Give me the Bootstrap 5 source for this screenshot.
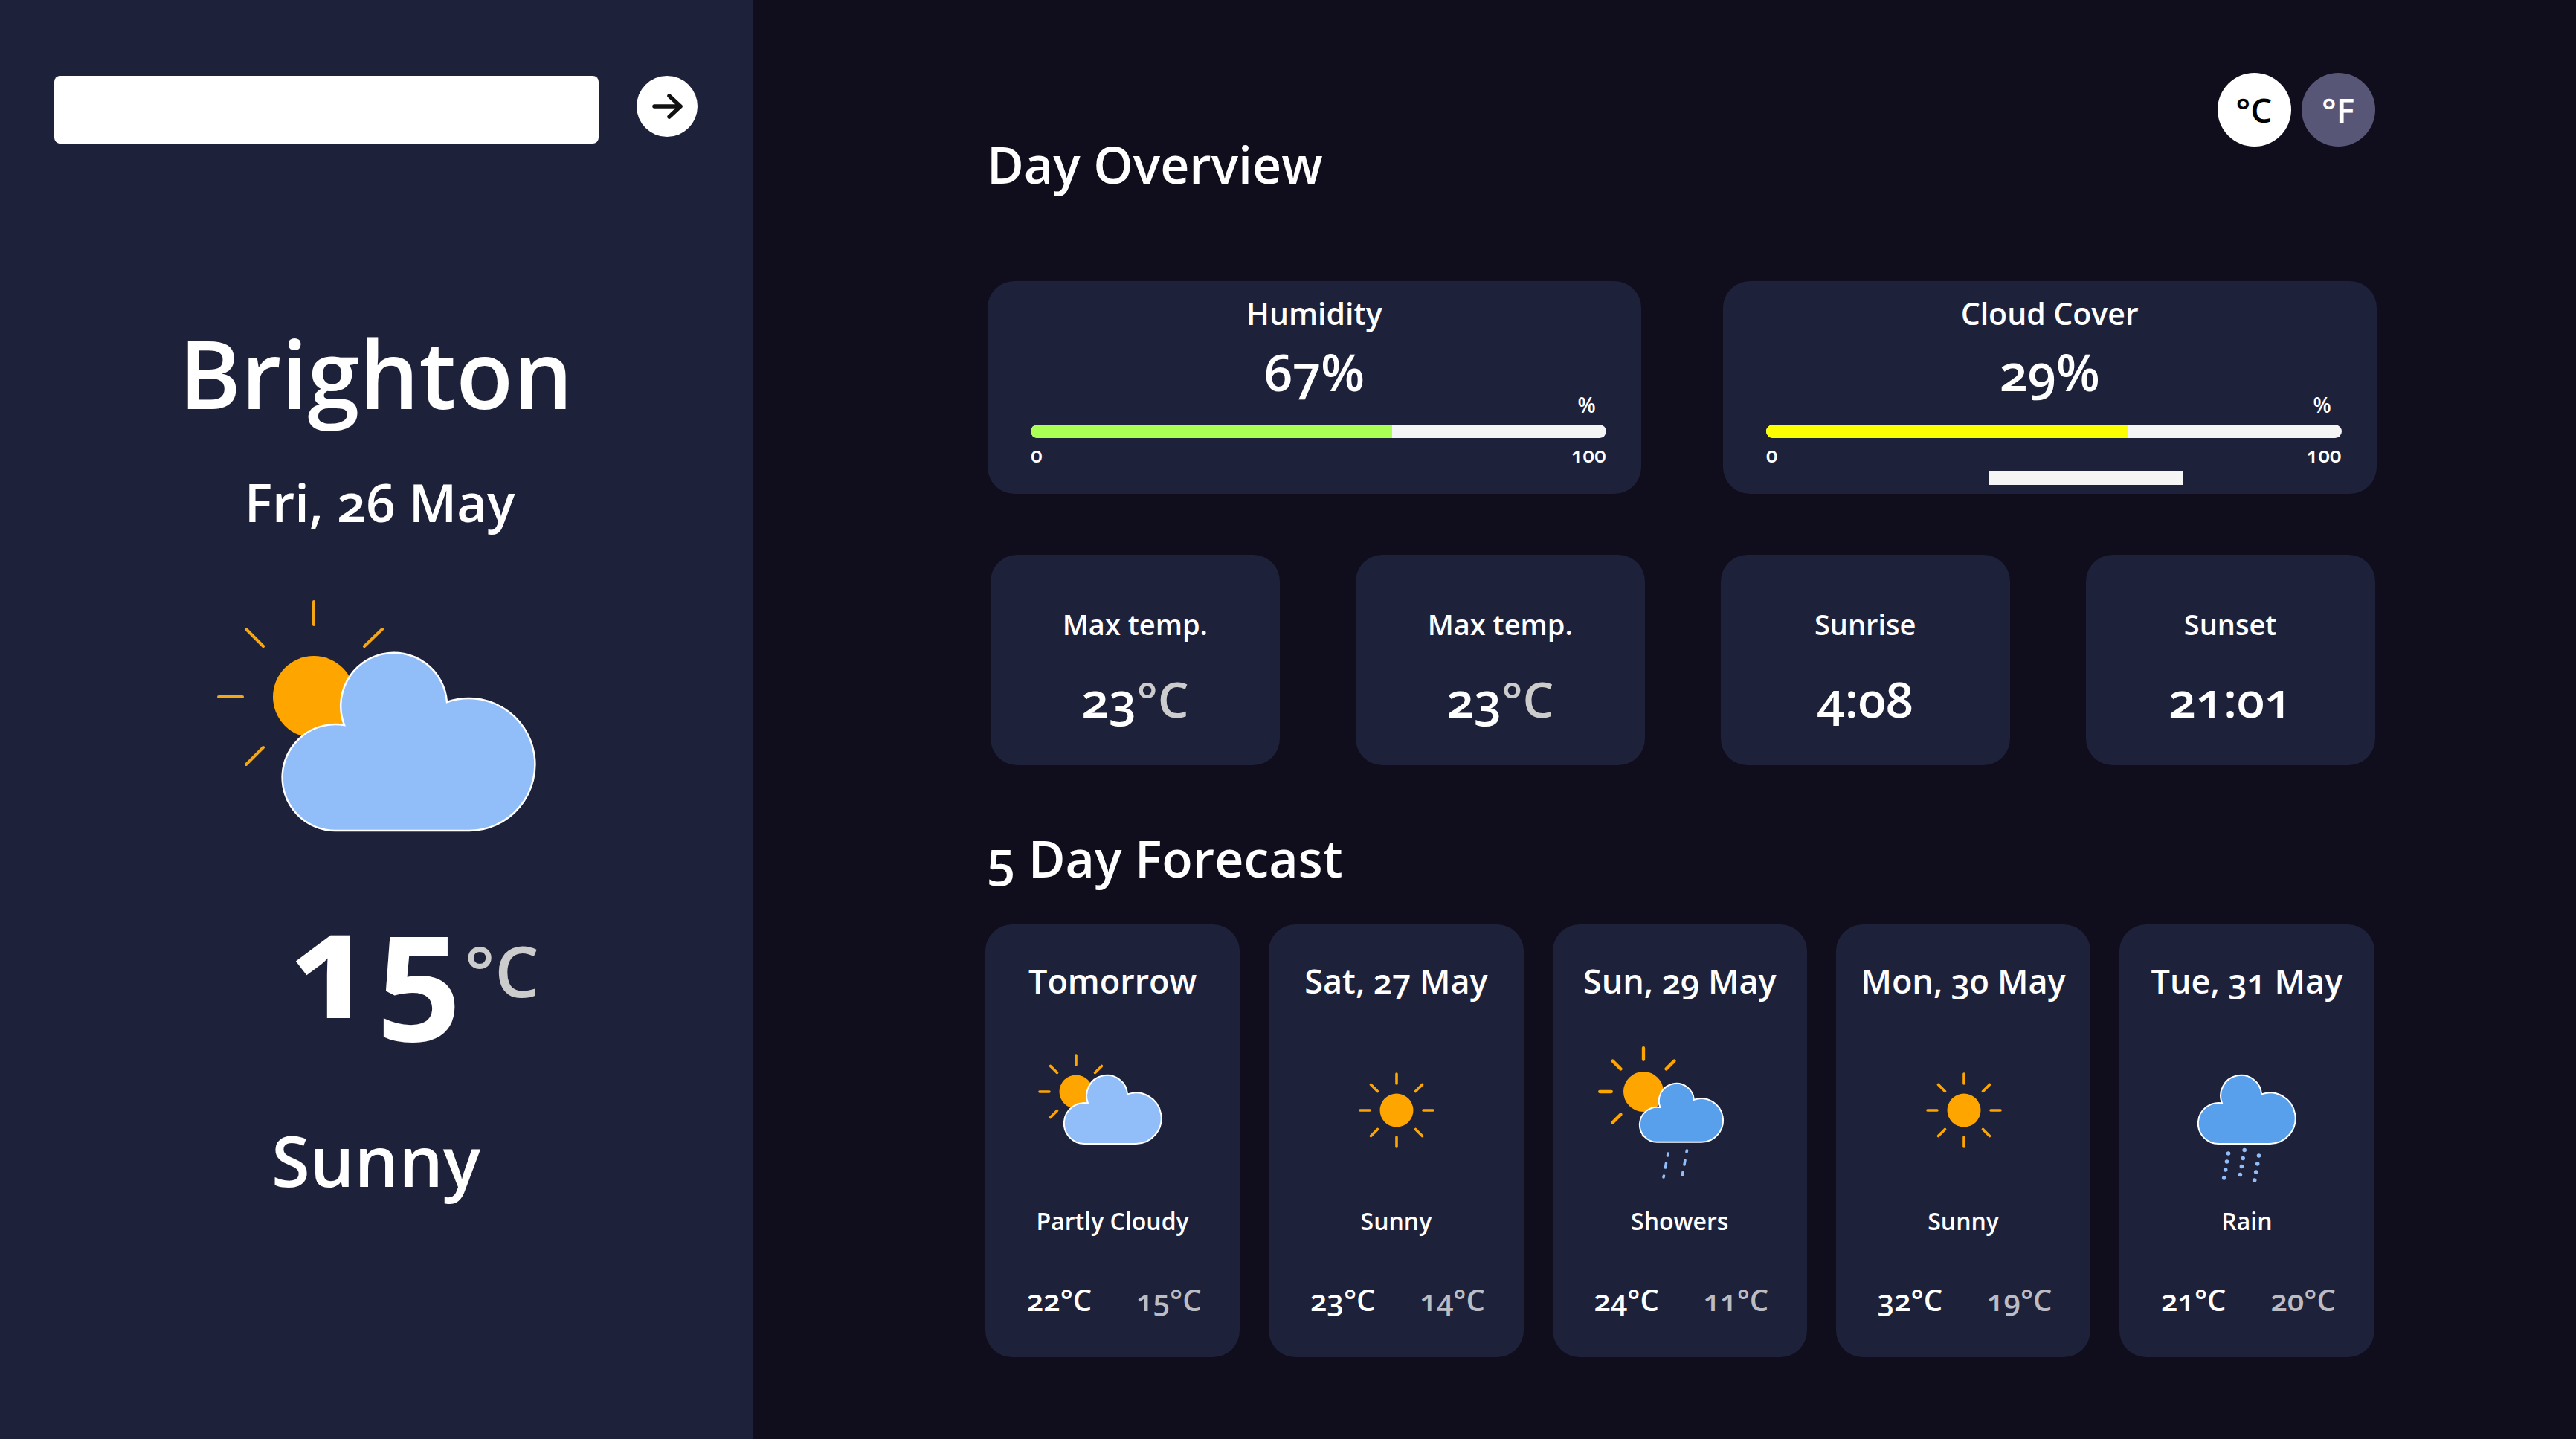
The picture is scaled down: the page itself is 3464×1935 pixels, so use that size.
<!DOCTYPE html>
<html lang="en">
<head>
<meta charset="utf-8">
<meta name="viewport" content="width=device-width, initial-scale=1">
<title>Weather - Brighton</title>
<link href="https://cdn.jsdelivr.net/npm/bootstrap@5.3.0/dist/css/bootstrap.min.css" rel="stylesheet">
<style>
  body { background: #100e1d; color: #fff; font-family: "Open Sans", "Noto Sans", sans-serif; font-weight: 600; font-variant-numeric: oldstyle-nums; }
  h1, h2, h3, p { margin: 0; font-weight: 600; }
  .side { flex: 0 0 29.25%; background: #1e213a; padding: 102px 75px 60px 73px; }
  .search-box { height: 91px; border: 0; border-radius: 8px; font-size: 38px; }
  .search-form { gap: 51px; }
  .go-btn { flex: 0 0 82px; height: 82px; background: #fff; }
  .city { font-size: 126px; line-height: 160px; margin-top: 228px; }
  .today { font-size: 70px; line-height: 88px; margin-top: 50px; padding-left: 10px; }
  .now-icon { width: 432px; height: 315px; margin-top: 86px; }
  .now-temp { font-size: 200px; line-height: 200px; margin-top: 72px; padding-left: 104px; font-weight: 700; }
  .now-unit { font-size: 94px; line-height: 100px; margin: 63px 0 0 4px; font-weight: 600; }
  .now-text { font-size: 94px; line-height: 120px; margin-top: 108px; }
  .unit-mute { color: #ccc; }
  .panel { padding: 98px 7.75vw 60px 9vw; }
  .panel-title { font-size: 68px; line-height: 80px; padding-left: 2px; }
  .top-title { margin-top: 83px; }
  .days-title { margin-top: 85px; }
  .unit-btn { width: 99px; height: 99px; padding: 0; font-size: 46px; font-weight: 600; background: #585676; color: #fff; }
  .unit-btn.active { background: #fff; color: #000; }
  .unit-set { gap: 14px; padding-right: 2px; }
  .tile { background: #1e213a; border-radius: 36px; flex: 1 1 0; min-width: 0; }
  .meters { gap: 110px; margin-top: 117px; padding-left: 3px; }
  .meter-tile { min-height: 286px; padding: 18px 47px 12px 58px; }
  .tile-label { font-size: 38px; line-height: 50px; }
  .meter-tile .tile-label { font-size: 41px; padding-right: 11px; }
  .meter-value { font-size: 68px; line-height: 60px; margin-top: 24px; padding-right: 11px; }
  .scale-text { font-size: 28px; line-height: 28px; }
  .meter-unit { padding-right: 14px; }
  .meter-bar { height: 18px; border-radius: 9px; background: #f5f5f5; margin: 13px 0 8px; }
  .bar-green { background: #aaff55; }
  .bar-yellow { background: #fbff00; }
  .bar-extra { width: 262px; height: 19px; background: #f5f5f5; margin: 8px 0 0 299px; }
  .stats { gap: 102px; margin-top: 82px; padding: 0 2px 0 7px; }
  .stat-tile { padding: 68px 0 58px; }
  .stat-value { font-size: 66px; line-height: 64px; margin-top: 43px; }
  .days { gap: 39px; margin-top: 49px; padding-right: 3px; }
  .day-tile { padding: 48px 0 51px; }
  .day-name { font-size: 45px; line-height: 56px; }
  .day-icon { width: 342px; height: 200px; margin-top: 53px; max-width: 100%; }
  .day-text { font-size: 32px; line-height: 40px; margin-top: 22px; }
  .day-temps { font-size: 40px; line-height: 50px; margin-top: 61px; margin-bottom: 1px; gap: 60px; padding-left: 4px; }
  .low { color: #bbbcc4; }
</style>
</head>
<body>
<svg width="0" height="0" class="position-absolute" aria-hidden="true">
  <defs>
    <path id="cloud" d="M72 239A71.500 71.500 0 1 1 83 97A71.500 71.500 0 1 1 221 66A89 89 0 1 1 251 239Z" stroke="#fff" vector-effect="non-scaling-stroke"/>
    <g id="sun" stroke="#ffa500" stroke-linecap="round">
      <circle r="22.500" fill="#ffa500" stroke="none"/>
      <path d="M0-36V-49M0 36V49M-36 0H-49M36 0H49M-25.500-25.500L-34.500-34.500M25.500-25.500L34.500-34.500M-25.500 25.500L-34.500 34.500M25.500 25.500L34.500 34.500" stroke-width="3.600"/>
    </g>
  </defs>
</svg>
<div class="d-flex min-vh-100">
  <aside class="side d-flex flex-column align-items-center">
    <form class="search-form d-flex align-items-start w-100">
      <input type="text" class="search-box form-control" aria-label="City">
      <button type="button" class="go-btn btn rounded-circle p-0 d-flex align-items-center justify-content-center" aria-label="Search">
        <svg width="42" height="36" viewBox="0 0 42 36" fill="none" stroke="#111" stroke-width="5.500" stroke-linecap="round" stroke-linejoin="round"><path d="M4 18H39M24 4L39 18L24 32"/></svg>
      </button>
    </form>
    <h1 class="city">Brighton</h1>
    <p class="today">Fri, 26 May</p>
    <svg class="now-icon" viewBox="290 805 432 315" aria-hidden="true">
      <circle cx="422" cy="937" r="55" fill="#ffa500"/>
      <path d="M422 809V840M331 846L354 869M514 846L490 869M294 937H326M354 1005L331 1028" stroke="#f5a615" stroke-width="4" stroke-linecap="round"/>
      <use href="#cloud" x="380" y="878" fill="#91bef8" stroke-width="2.500"/>
    </svg>
    <div class="now-temp d-flex align-items-start"><span>15</span><span class="now-unit unit-mute">°C</span></div>
    <p class="now-text">Sunny</p>
  </aside>
  <main class="panel flex-grow-1">
    <header class="d-flex justify-content-between align-items-start">
      <h2 class="panel-title top-title">Day Overview</h2>
      <div class="unit-set d-flex">
        <button type="button" class="unit-btn btn rounded-circle border-0 active">°C</button>
        <button type="button" class="unit-btn btn rounded-circle border-0">°F</button>
      </div>
    </header>
    <section class="meters d-flex">
      <div class="tile meter-tile">
        <h3 class="tile-label text-center">Humidity</h3>
        <p class="meter-value text-center">67%</p>
        <p class="scale-text meter-unit text-end">%</p>
        <div class="meter-bar progress"><div class="progress-bar bar-green" style="width: 62.8%"></div></div>
        <div class="scale-text d-flex justify-content-between"><span>0</span><span>100</span></div>
      </div>
      <div class="tile meter-tile">
        <h3 class="tile-label text-center">Cloud Cover</h3>
        <p class="meter-value text-center">29%</p>
        <p class="scale-text meter-unit text-end">%</p>
        <div class="meter-bar progress"><div class="progress-bar bar-yellow" style="width: 62.8%"></div></div>
        <div class="scale-text d-flex justify-content-between"><span>0</span><span>100</span></div>
        <div class="bar-extra"></div>
      </div>
    </section>
    <section class="stats d-flex text-center">
      <div class="tile stat-tile"><h3 class="tile-label">Max temp.</h3><p class="stat-value">23<span class="unit-mute">°C</span></p></div>
      <div class="tile stat-tile"><h3 class="tile-label">Max temp.</h3><p class="stat-value">23<span class="unit-mute">°C</span></p></div>
      <div class="tile stat-tile"><h3 class="tile-label">Sunrise</h3><p class="stat-value">4:08</p></div>
      <div class="tile stat-tile"><h3 class="tile-label">Sunset</h3><p class="stat-value">21:01</p></div>
    </section>
    <h2 class="panel-title days-title">5 Day Forecast</h2>
    <section class="days d-flex text-center">
      <article class="tile day-tile">
        <h3 class="day-name">Tomorrow</h3>
        <svg class="day-icon" viewBox="0 0 342 200" aria-hidden="true">
          <use href="#sun" x="122" y="68"/>
          <use href="#cloud" transform="translate(106 46) scale(.385)" fill="#91bef8" stroke-width="2"/>
        </svg>
        <p class="day-text">Partly Cloudy</p>
        <div class="day-temps d-flex justify-content-center"><span>22°C</span><span class="low">15°C</span></div>
      </article>
      <article class="tile day-tile">
        <h3 class="day-name">Sat, 27 May</h3>
        <svg class="day-icon" viewBox="0 0 342 200" aria-hidden="true"><use href="#sun" x="172" y="93"/></svg>
        <p class="day-text">Sunny</p>
        <div class="day-temps d-flex justify-content-center"><span>23°C</span><span class="low">14°C</span></div>
      </article>
      <article class="tile day-tile">
        <h3 class="day-name">Sun, 29 May</h3>
        <svg class="day-icon" viewBox="0 0 342 200" aria-hidden="true">
          <use href="#sun" transform="translate(122 68) scale(1.200)"/>
          <use href="#cloud" transform="translate(117 57) scale(.33)" fill="#589fec" stroke-width="2"/>
          <path d="M155 151L154.500 154M152.500 164L151.500 170M149.500 181L149 183M180.500 147L180 149M178 160L177 166M175 176L174.500 180" stroke="#91bef8" stroke-width="3.600" stroke-linecap="round"/>
        </svg>
        <p class="day-text">Showers</p>
        <div class="day-temps d-flex justify-content-center"><span>24°C</span><span class="low">11°C</span></div>
      </article>
      <article class="tile day-tile">
        <h3 class="day-name">Mon, 30 May</h3>
        <svg class="day-icon" viewBox="0 0 342 200" aria-hidden="true"><use href="#sun" x="172" y="93"/></svg>
        <p class="day-text">Sunny</p>
        <div class="day-temps d-flex justify-content-center"><span>32°C</span><span class="low">19°C</span></div>
      </article>
      <article class="tile day-tile">
        <h3 class="day-name">Tue, 31 May</h3>
        <svg class="day-icon" viewBox="0 0 342 200" aria-hidden="true">
          <use href="#cloud" transform="translate(106 46) scale(.385)" fill="#589fec" stroke-width="2"/>
          <g fill="#91bef8">
            <circle cx="146.500" cy="151" r="2.800"/><circle cx="144.500" cy="162" r="2.800"/><circle cx="142.700" cy="173" r="2.800"/><circle cx="140.700" cy="184" r="2.800"/>
            <circle cx="168.200" cy="146.500" r="2.800"/><circle cx="166.200" cy="157.500" r="2.800"/><circle cx="164.400" cy="168.500" r="2.800"/><circle cx="162.400" cy="179.500" r="2.800"/>
            <circle cx="187.500" cy="154" r="2.800"/><circle cx="185.700" cy="165" r="2.800"/><circle cx="183.700" cy="176" r="2.800"/><circle cx="181.700" cy="187" r="2.800"/>
          </g>
        </svg>
        <p class="day-text">Rain</p>
        <div class="day-temps d-flex justify-content-center"><span>21°C</span><span class="low">20°C</span></div>
      </article>
    </section>
  </main>
</div>
<script src="https://cdn.jsdelivr.net/npm/bootstrap@5.3.0/dist/js/bootstrap.bundle.min.js"></script>
</body>
</html>
